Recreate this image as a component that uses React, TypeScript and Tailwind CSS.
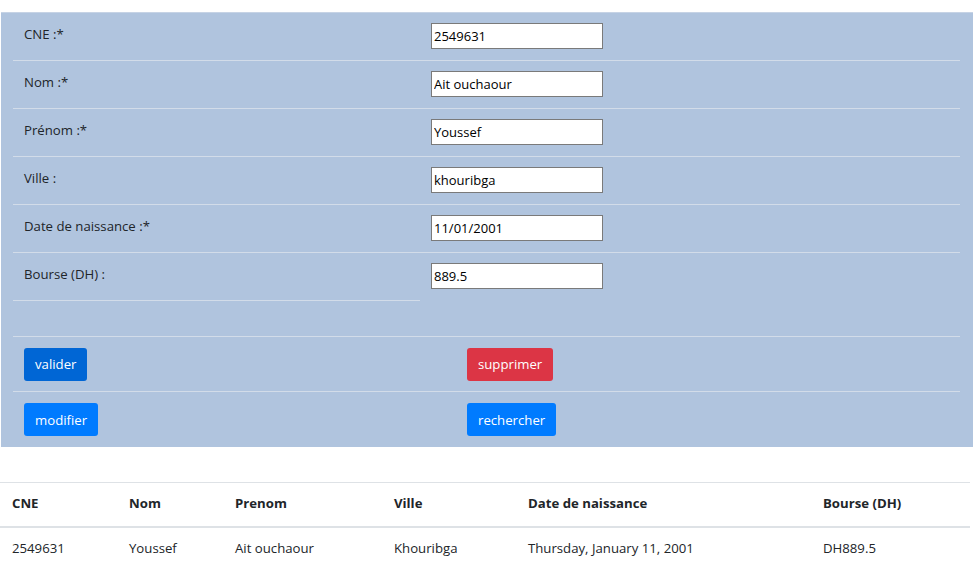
import React from 'react';

const fields = [
  { label: 'CNE :*', value: '2549631' },
  { label: 'Nom :*', value: 'Ait ouchaour' },
  { label: 'Prénom :*', value: 'Youssef' },
  { label: 'Ville :', value: 'khouribga' },
  { label: 'Date de naissance :*', value: '11/01/2001' },
  { label: 'Bourse (DH) :', value: '889.5' },
];

const columns = [
  { title: 'CNE', w: 'w-[117px]' },
  { title: 'Nom', w: 'w-[106px]' },
  { title: 'Prenom', w: 'w-[159px]' },
  { title: 'Ville', w: 'w-[134px]' },
  { title: 'Date de naissance', w: 'w-[295px]' },
  { title: 'Bourse (DH)', w: 'flex-1' },
];

const row = ['2549631', 'Youssef', 'Ait ouchaour', 'Khouribga', 'Thursday, January 11, 2001', 'DH889.5'];

export default function App() {
  return (
    <div className="min-h-screen bg-white text-[13.2px] text-[#212529] font-['Open_Sans',sans-serif] pt-3">
      {/* form panel */}
      <div className="ml-px w-[972px] bg-[#b0c4de] border-t border-[#c6d3e5] pl-3">
        <div className="w-[947px]">
          {fields.map((f, i) => (
            <div key={f.label} className="flex h-[48px]">
              <div className="w-[407px] pl-[11px] pt-[12px] border-b border-[#d2dce9]">{f.label}</div>
              <div
                className={
                  'flex-1 pl-[11px] pt-[10px] ' + (i < fields.length - 1 ? 'border-b border-[#d2dce9]' : '')
                }
              >
                <input
                  defaultValue={f.value}
                  className="w-[172px] h-[26px] bg-white border border-[#7a7a7a] px-[2px] text-[13px] text-black outline-none"
                />
              </div>
            </div>
          ))}
          <div className="h-[36px] border-b border-[#d2dce9]" />
          <div className="flex h-[55px] items-center border-b border-[#d2dce9]">
            <div className="w-[454px] pl-[11px]">
              <button className="h-[33px] px-[11px] pt-[2px] rounded-[3px] bg-[#0066d5] text-white">valider</button>
            </div>
            <div>
              <button className="h-[33px] px-[11px] pt-[2px] rounded-[3px] bg-[#dc3545] text-white">supprimer</button>
            </div>
          </div>
          <div className="flex h-[55px] items-center">
            <div className="w-[454px] pl-[11px]">
              <button className="h-[33px] px-[11px] pt-[2px] rounded-[3px] bg-[#007bff] text-white">modifier</button>
            </div>
            <div>
              <button className="h-[33px] px-[11px] pt-[2px] rounded-[3px] bg-[#007bff] text-white">rechercher</button>
            </div>
          </div>
        </div>
      </div>

      {/* results table */}
      <div className="mt-[35px] w-[970px] border-t border-[#dee2e6]">
        <div className="flex h-[45px] items-center pb-[2px] font-bold border-b-2 border-[#dee2e6]">
          {columns.map((c) => (
            <div key={c.title} className={c.w + ' pl-3'}>
              {c.title}
            </div>
          ))}
        </div>
        <div className="flex h-[44px] items-center pb-[2px]">
          {row.map((v, i) => (
            <div key={i} className={columns[i].w + ' pl-3'}>
              {v}
            </div>
          ))}
        </div>
      </div>
    </div>
  );
}
